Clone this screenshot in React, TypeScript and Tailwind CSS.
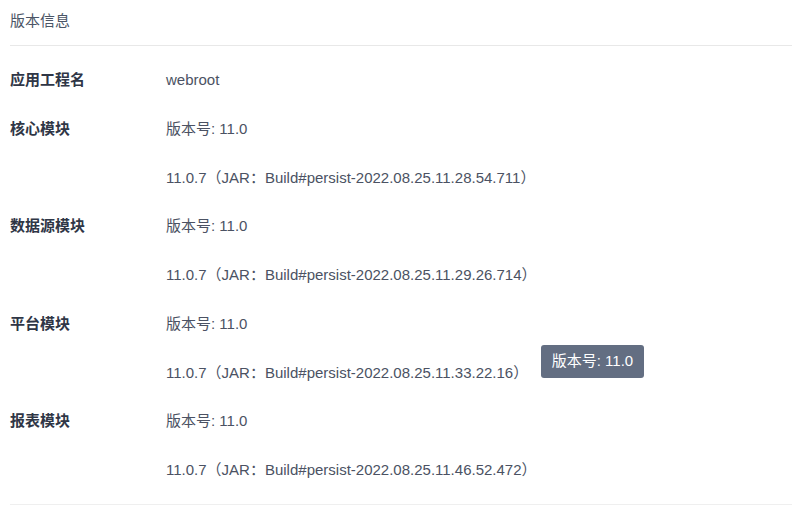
const modules = [
  { name: "核心模块", build: "2022.08.25.11.28.54.711" },
  { name: "数据源模块", build: "2022.08.25.11.29.26.714" },
  { name: "平台模块", build: "2022.08.25.11.33.22.16" },
  { name: "报表模块", build: "2022.08.25.11.46.52.472" },
];

const font = { fontFamily: '"Liberation Sans", "Noto Sans CJK SC", sans-serif' };

export default function App() {
  return (
    <div className="relative w-[792px] h-[505px] bg-white pl-[10px] text-[15px]" style={font}>
      <div className="h-[46px] border-b border-[#e8e8e8] leading-[42px] text-[#4b5566]">版本信息</div>

      <div className="pt-[10px] pb-[9px] border-b border-[#efefef]">
        <div className="grid grid-cols-[156px_1fr] h-[48.75px] items-center">
          <span className="font-bold text-[#2f3646]">应用工程名</span>
          <span className="text-[#4b5263]">webroot</span>
        </div>
        {modules.map((m) => (
          <div key={m.name} className="grid grid-cols-[156px_1fr]">
            <span className="font-bold text-[#2f3646] h-[48.75px] flex items-center">{m.name}</span>
            <div className="text-[#4b5263]">
              <div className="h-[48.75px] flex items-center">版本号: 11.0</div>
              <div className="h-[48.75px] flex items-center whitespace-pre">
                11.0.7（JAR：Build#persist-{m.build}）
              </div>
            </div>
          </div>
        ))}
      </div>

      <div className="absolute left-[541px] top-[345px] w-[103px] h-[33px] rounded-[3px] bg-[#636e82] text-white flex items-center justify-center">
        版本号: 11.0
      </div>
    </div>
  );
}
